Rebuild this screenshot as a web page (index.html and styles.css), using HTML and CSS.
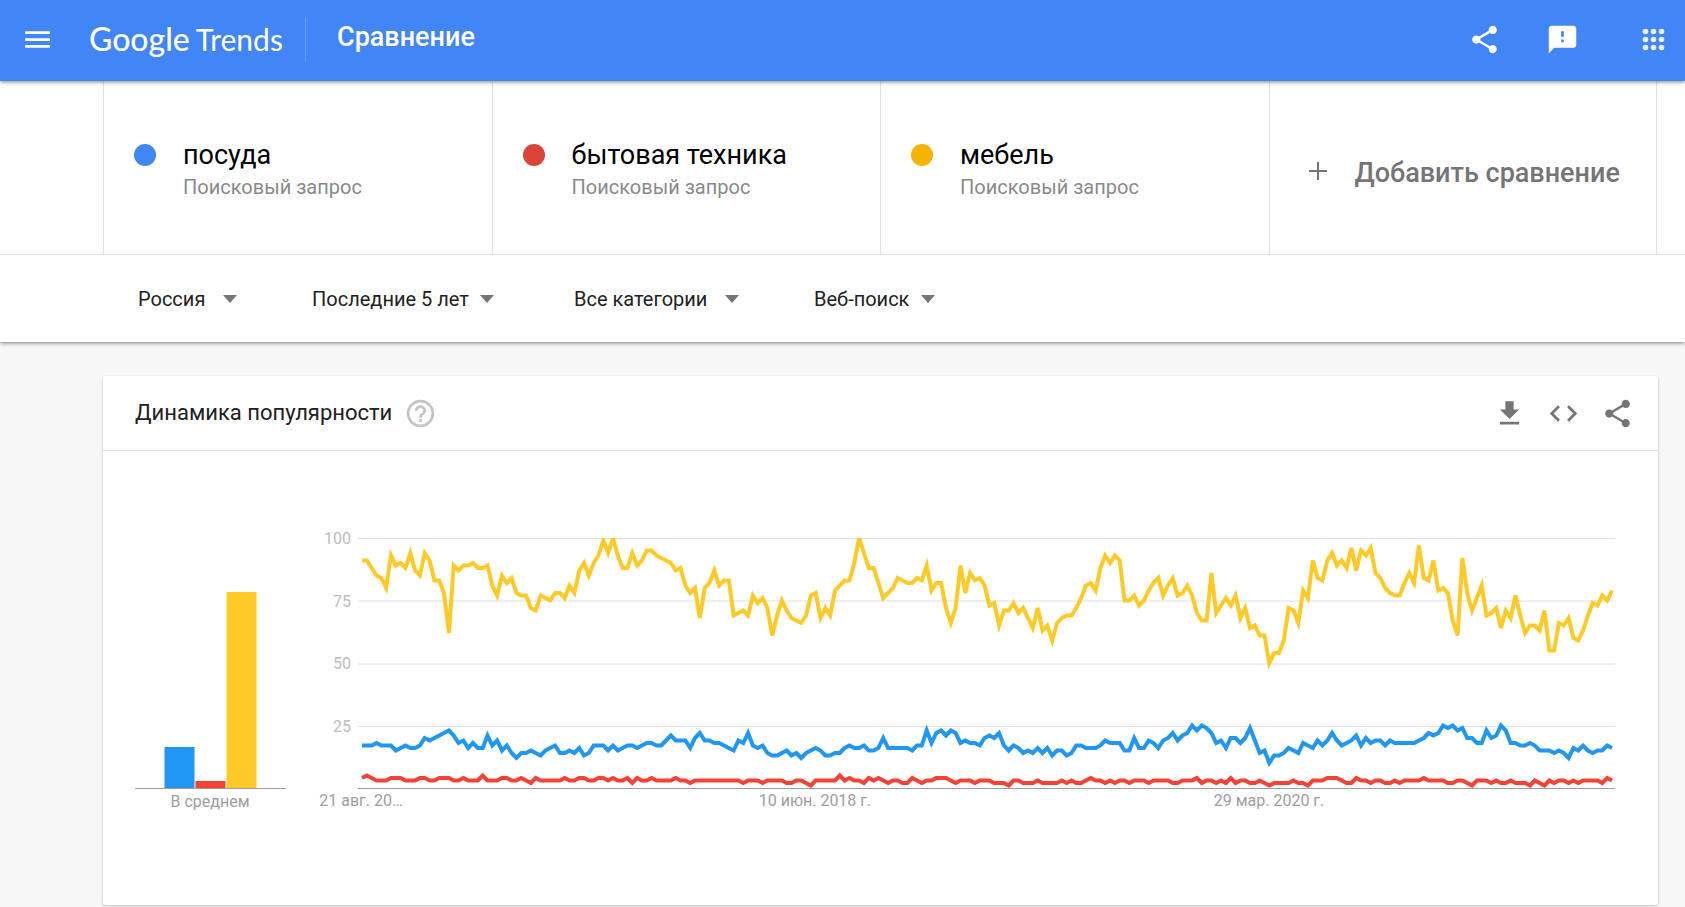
FILE: index.html
```html
<!DOCTYPE html>
<html lang="ru">
<head>
<meta charset="utf-8">
<meta name="viewport" content="width=device-width, initial-scale=1">
<title>Google Trends – Сравнение</title>
<link rel="stylesheet" href="styles.css">
</head>
<body>
<header class="topbar">
  <button class="icon-btn menu-btn" type="button" aria-label="Меню">
    <svg class="icon" viewBox="0 0 24 24"><path d="M3 18h18v-2H3v2zm0-5h18v-2H3v2zm0-7v2h18V6H3z"/></svg>
  </button>
  <a class="logo" href="#"><span class="logo-google">Google</span><span class="logo-trends">Trends</span></a>
  <h1 class="page-title">Сравнение</h1>
  <div class="topbar-actions">
    <button class="icon-btn" type="button" aria-label="Поделиться">
      <svg class="icon" viewBox="0 0 24 24"><path d="M18 16.08c-.76 0-1.44.3-1.96.77L8.91 12.7c.05-.23.09-.46.09-.7s-.04-.47-.09-.7l7.05-4.11c.54.5 1.25.81 2.04.81 1.66 0 3-1.34 3-3s-1.34-3-3-3-3 1.34-3 3c0 .24.04.47.09.7L8.04 9.81C7.5 9.31 6.79 9 6 9c-1.66 0-3 1.34-3 3s1.340 3 3 3c.79 0 1.500-.31 2.040-.81l7.120 4.160c-.05.21-.08.43-.08.65 0 1.610 1.310 2.920 2.920 2.920s2.920-1.310 2.920-2.920-1.310-2.920-2.920-2.920z"/></svg>
    </button>
    <button class="icon-btn" type="button" aria-label="Отправить отзыв">
      <svg class="icon" viewBox="0 0 24 24"><path d="M20 2H4c-1.100 0-1.990.9-1.990 2L2 22l4-4h14c1.100 0 2-.9 2-2V4c0-1.100-.9-2-2-2zm-7 12h-2v-2h2v2zm0-4h-2V6h2v4z"/></svg>
    </button>
    <button class="icon-btn apps-btn" type="button" aria-label="Приложения Google">
      <svg class="icon" viewBox="0 0 33 33"><circle cx="8.500" cy="8.500" r="2.800"/><circle cx="16.500" cy="8.500" r="2.800"/><circle cx="24.500" cy="8.500" r="2.800"/><circle cx="8.500" cy="16.500" r="2.800"/><circle cx="16.500" cy="16.500" r="2.800"/><circle cx="24.500" cy="16.500" r="2.800"/><circle cx="8.500" cy="24.500" r="2.800"/><circle cx="16.500" cy="24.500" r="2.800"/><circle cx="24.500" cy="24.500" r="2.800"/></svg>
    </button>
  </div>
</header>

<section class="query">
  <div class="terms">
    <div class="term">
      <span class="dot dot-blue"></span>
      <div><div class="term-name">посуда</div><div class="term-type">Поисковый запрос</div></div>
    </div>
    <div class="term">
      <span class="dot dot-red"></span>
      <div><div class="term-name">бытовая техника</div><div class="term-type">Поисковый запрос</div></div>
    </div>
    <div class="term">
      <span class="dot dot-yellow"></span>
      <div><div class="term-name">мебель</div><div class="term-type">Поисковый запрос</div></div>
    </div>
    <button class="add-term" type="button">
      <svg class="plus" viewBox="0 0 18 18"><path d="M8 0h2v8h8v2h-8v8H8v-8H0V8h8z"/></svg>
      <span class="add-label">Добавить сравнение</span>
    </button>
  </div>
  <div class="filters">
    <label class="filter filter-wide"><select aria-label="Регион"><option>Россия</option></select><span class="caret"></span></label>
    <label class="filter"><select aria-label="Период"><option>Последние 5 лет</option></select><span class="caret"></span></label>
    <label class="filter filter-wide"><select aria-label="Категория"><option>Все категории</option></select><span class="caret"></span></label>
    <label class="filter"><select aria-label="Тип поиска"><option>Веб-поиск</option></select><span class="caret"></span></label>
  </div>
</section>

<main class="card">
  <div class="card-head">
    <h2 class="card-title">Динамика популярности</h2>
    <button class="icon-btn help-btn" type="button" aria-label="Справка">
      <svg class="icon" viewBox="0 0 24 24"><path d="M11 18h2v-2h-2v2zm1-16C6.480 2 2 6.480 2 12s4.480 10 10 10 10-4.480 10-10S17.520 2 12 2zm0 18c-4.410 0-8-3.590-8-8s3.590-8 8-8 8 3.590 8 8-3.590 8-8 8zm0-14c-2.210 0-4 1.790-4 4h2c0-1.100.9-2 2-2s2 .9 2 2c0 2-3 1.750-3 5h2c0-2.250 3-2.500 3-5 0-2.210-1.790-4-4-4z"/></svg>
    </button>
    <div class="card-actions">
      <button class="icon-btn" type="button" aria-label="Скачать CSV">
        <svg class="icon" viewBox="0 0 24 24"><path d="M19 9h-4V3H9v6H5l7 7 7-7zM5 18v2h14v-2H5z"/></svg>
      </button>
      <button class="icon-btn" type="button" aria-label="Встроить">
        <svg class="icon" viewBox="0 0 24 24"><path d="M9.400 16.600L4.800 12l4.600-4.600L8 6l-6 6 6 6 1.400-1.400zm5.200 0l4.600-4.600-4.600-4.600L16 6l6 6-6 6-1.400-1.400z"/></svg>
      </button>
      <button class="icon-btn" type="button" aria-label="Поделиться графиком">
        <svg class="icon" viewBox="0 0 24 24"><path d="M18 16.080c-.76 0-1.440.3-1.960.77L8.910 12.700c.05-.23.09-.46.09-.7s-.04-.47-.09-.7l7.050-4.110c.54.5 1.250.81 2.040.81 1.660 0 3-1.340 3-3s-1.340-3-3-3-3 1.340-3 3c0 .24.04.47.09.7L8.040 9.810C7.500 9.310 6.790 9 6 9c-1.660 0-3 1.340-3 3s1.340 3 3 3c.79 0 1.500-.31 2.040-.81l7.120 4.160c-.05.21-.08.43-.08.65 0 1.610 1.310 2.920 2.920 2.920s2.920-1.310 2.920-2.920-1.310-2.920-2.920-2.920z"/></svg>
      </button>
    </div>
  </div>
  <div class="card-body">
    <svg class="average" viewBox="0 0 151 310" role="img" aria-label="В среднем">
      <rect class="fill-blue" x="29.500" y="227" width="30" height="41"/>
      <rect class="fill-red" x="60.500" y="261" width="30" height="7"/>
      <rect class="fill-yellow" x="91.500" y="72" width="30" height="196"/>
      <path class="baseline" d="M0 268.500H151"/>
      <text class="axis-x" x="75" y="287">В среднем</text>
    </svg>
    <svg class="timeline" viewBox="0 0 1318 310" role="img" aria-label="Динамика популярности">
      <path class="grid" d="M48 18.500H1305M48 81H1305M48 144H1305M48 206.500H1305"/>
      <path class="baseline" d="M48 268.500H1305"/>
      <text class="axis-y" x="41" y="24">100</text>
      <text class="axis-y" x="41" y="87">75</text>
      <text class="axis-y" x="41" y="149">50</text>
      <text class="axis-y" x="41" y="212">25</text>
      <text class="axis-x" x="51" y="286">21 авг. 20…</text>
      <text class="axis-x" x="505" y="286">10 июн. 2018 г.</text>
      <text class="axis-x" x="959" y="286">29 мар. 2020 г.</text>
      <svg x="48" y="18" width="1257" height="250" viewBox="0 0 1257 250">
        <polyline class="series stroke-blue" id="series-blue"/>
        <polyline class="series stroke-red" id="series-red"/>
        <polyline class="series stroke-yellow" id="series-yellow"/>
      </svg>
    </svg>
  </div>
</main>
<script src="chart.js"></script>
</body>
</html>
```
FILE: styles.css
```css
* {
  box-sizing: border-box;
}

body {
  margin: 0;
  min-height: 100vh;
  background: #f7f7f7;
  color: #212121;
  font-family: Roboto, "Noto Sans", sans-serif;
}

button,
select {
  margin: 0;
  padding: 0;
  border: 0;
  background: none;
  color: inherit;
  font: inherit;
  cursor: pointer;
}

.icon-btn {
  display: flex;
  flex: none;
}

.icon {
  display: block;
  width: 33px;
  height: 33px;
  fill: currentColor;
}

.topbar {
  position: relative;
  z-index: 1;
  display: flex;
  align-items: center;
  height: 81px;
  padding: 0 15px 3px 21px;
  background: #4285f4;
  color: #fff;
  box-shadow: 0 1px 4px rgba(0, 0, 0, 0.5);
}

.logo {
  display: flex;
  align-items: baseline;
  gap: 6px;
  width: 216px;
  margin-left: 35px;
  color: #fff;
  font-family: Lato, Roboto, sans-serif;
  line-height: 44px;
  text-decoration: none;
  white-space: nowrap;
}

.logo-google {
  font-size: 32px;
  font-weight: 500;
}

.logo-trends {
  font-size: 30px;
}

.page-title {
  margin: 0;
  padding: 0 0 4px 31px;
  border-left: 1px solid rgba(255, 255, 255, 0.2);
  font-size: 27px;
  font-weight: 500;
  line-height: 40px;
}

.topbar-actions {
  display: flex;
  align-items: center;
  margin-left: auto;
  gap: 45px;
}

.apps-btn {
  margin-left: 13px;
  opacity: 0.87;
}

.query {
  background: #fff;
  box-shadow: 0 1px 4px rgba(0, 0, 0, 0.5);
}

.terms {
  display: grid;
  grid-template-columns: repeat(4, 1fr);
  height: 174px;
  padding: 0 28px 0 103px;
  border-bottom: 1px solid #e0e0e0;
}

.term {
  display: flex;
  gap: 27px;
  padding: 56px 0 0 30px;
  border-left: 1px solid #e0e0e0;
}

.dot {
  flex: none;
  width: 22px;
  height: 22px;
  margin-top: 7px;
  border-radius: 50%;
}

.dot-blue {
  background: #4285f4;
}

.dot-red {
  background: #db4437;
}

.dot-yellow {
  background: #f4b400;
}

.term-name {
  color: #000;
  font-size: 27px;
  line-height: 36px;
}

.term-type {
  color: #8a8a8a;
  font-size: 20px;
  line-height: 28px;
}

.add-term {
  display: flex;
  align-items: center;
  gap: 28px;
  padding: 6px 0 0 39px;
  border: solid #e0e0e0;
  border-width: 0 1px;
  color: #757575;
  font-size: 27px;
  font-weight: 500;
  white-space: nowrap;
}

.add-label {
  padding-top: 4px;
}

.plus {
  flex: none;
  width: 18px;
  height: 18px;
  fill: currentColor;
}

.filters {
  display: flex;
  align-items: center;
  gap: 75px;
  height: 87px;
  padding: 0 27px 0 138px;
}

.filter {
  display: flex;
  align-items: center;
  gap: 11px;
  margin-right: 5px;
  font-size: 20px;
  line-height: 28px;
}

.filter-wide {
  gap: 17px;
  margin-right: 0;
}

.filter select {
  appearance: none;
}

.caret {
  border: solid transparent;
  border-width: 8px 7px 0;
  border-top-color: #757575;
}

.card {
  margin: 34px 27px 2px 103px;
  border-radius: 3px;
  background: #fff;
  box-shadow: 0 1px 3px rgba(0, 0, 0, 0.24);
}

.card-head {
  display: flex;
  align-items: center;
  height: 75px;
  padding: 0 24px 0 32px;
  border-bottom: 1px solid #e0e0e0;
}

.card-title {
  margin: 0;
  font-size: 22px;
  font-weight: 400;
  line-height: 32px;
}

.help-btn {
  margin-left: 12px;
  color: #c4c4c4;
}

.card-actions {
  display: flex;
  gap: 21px;
  margin-left: auto;
  color: #757575;
}

.card-body {
  display: flex;
  align-items: flex-start;
  gap: 24px;
  padding: 69px 30px 75px 32px;
}

.average {
  flex: 0 1 151px;
  min-width: 0;
}

.timeline {
  flex: 1 1 0;
  min-width: 0;
}

.grid {
  stroke: #e0e0e0;
  fill: none;
}

.baseline {
  stroke: #9e9e9e;
}

.axis-x,
.axis-y {
  font-size: 16px;
}

.axis-x {
  fill: #9e9e9e;
  text-anchor: middle;
}

.axis-y {
  fill: #bdbdbd;
  text-anchor: end;
}

.series {
  fill: none;
  stroke-width: 4;
}

.stroke-blue {
  stroke: #2196f3;
}

.stroke-red {
  stroke: #f44336;
}

.stroke-yellow {
  stroke: #ffca28;
}

.fill-blue {
  fill: #2196f3;
}

.fill-red {
  fill: #f44336;
}

.fill-yellow {
  fill: #ffca28;
}
```
FILE: chart.js
```js
const data = {
  yellow: [
    91,91,88,85,84,80,93,89,90,88,94,87,85,94,91,83,83,78,62,89,87,89,89,90,88,88,89,81,77,85,82,84,78,
    77,77,72,71,77,76,75,78,78,76,81,78,87,90,85,90,93,99,94,100,93,88,88,94,89,91,95,95,93,92,91,90,87,88,
    81,78,80,68,80,82,87,81,83,83,69,70,71,69,77,74,76,72,61,69,75,71,68,67,66,69,77,78,68,72,69,79,81,83,
    83,90,100,94,88,88,82,76,78,80,84,83,82,82,84,83,89,79,82,82,72,66,72,89,78,86,83,84,81,73,74,65,
    71,71,74,70,72,68,64,72,63,65,59,66,68,69,69,72,76,81,82,79,88,93,90,93,91,75,75,77,73,75,79,82,84,77,
    81,84,77,78,81,77,70,67,67,86,70,73,76,73,77,68,72,64,65,61,61,50,54,54,59,72,71,66,79,76,91,
    84,83,91,94,89,91,88,96,87,95,93,96,86,84,80,78,77,77,82,86,82,97,84,83,91,79,80,78,67,61,92,78,71,76,
    81,69,70,72,64,71,68,77,69,62,65,65,63,71,55,55,66,65,68,60,59,63,69,74,73,77,75,79
  ],
  blue: [
    17,17,17,18,17,17,17,15,16,17,16,16,17,20,19,20,21,22,23,21,18,19,16,18,16,16,21,17,19,15,17,14,12,
    14,14,15,14,13,15,16,17,14,14,15,14,16,13,14,17,17,17,15,17,15,16,17,17,16,17,18,18,17,17,19,21,19,19,
    19,16,20,22,19,19,18,18,17,16,15,19,18,22,17,16,17,14,13,13,14,15,13,14,12,14,15,16,15,13,13,14,14,16,
    17,16,16,17,15,15,16,20,16,16,16,16,16,15,17,17,23,18,22,23,21,23,22,18,19,18,18,17,20,21,20,22,
    17,15,17,16,14,15,14,16,14,16,13,15,15,13,14,17,17,16,16,16,17,19,18,18,18,15,15,20,16,16,19,18,16,19,
    20,22,19,21,22,25,23,25,24,22,18,19,16,20,20,18,20,24,19,14,15,10,13,13,14,16,15,14,18,17,16,
    19,17,19,22,19,17,18,19,21,17,20,18,19,19,17,19,18,18,18,18,18,19,20,22,21,22,25,24,25,23,24,20,20,18,
    18,23,20,21,25,23,18,18,17,17,18,17,15,15,15,14,15,14,12,16,15,17,15,14,15,15,17,16
  ],
  red: [
    4,5,4,3,3,3,4,4,4,3,3,3,4,4,3,3,4,4,4,3,3,4,3,3,3,5,3,3,3,4,4,3,3,
    4,3,2,4,3,3,3,3,3,4,3,3,4,4,3,3,4,4,3,4,3,3,4,2,4,3,3,4,3,3,3,3,4,3,
    3,2,3,3,3,3,3,3,3,3,3,3,2,3,3,3,2,3,3,3,3,2,2,3,3,2,1,3,3,3,3,3,5,3,
    4,3,3,2,4,3,4,3,2,3,3,2,2,4,3,2,3,3,4,4,4,3,2,3,3,3,2,3,3,3,2,2,
    2,1,3,3,2,2,2,3,2,2,2,2,3,2,3,2,2,3,4,3,3,2,3,2,3,3,2,3,3,3,2,3,3,3,
    3,2,2,3,3,3,4,2,3,3,2,3,2,4,2,3,3,2,2,3,2,1,2,2,2,2,3,2,2,1,3,
    3,3,4,4,4,3,2,2,4,3,3,2,3,3,2,2,3,2,3,3,3,3,4,3,3,3,3,2,2,3,3,2,1,3,
    3,3,2,3,2,2,3,2,2,2,1,3,2,1,3,2,3,3,2,3,2,3,3,3,3,2,4,3
  ]
};

const left = 4;
const plotWidth = 1250;
const plotHeight = 250;

for (const [name, values] of Object.entries(data)) {
  const step = plotWidth / (values.length - 1);
  const points = values.map((v, i) =>
    (left + i * step).toFixed(1) + "," + (plotHeight - v * plotHeight / 100).toFixed(1));
  document.getElementById("series-" + name).setAttribute("points", points.join(" "));
}
```
